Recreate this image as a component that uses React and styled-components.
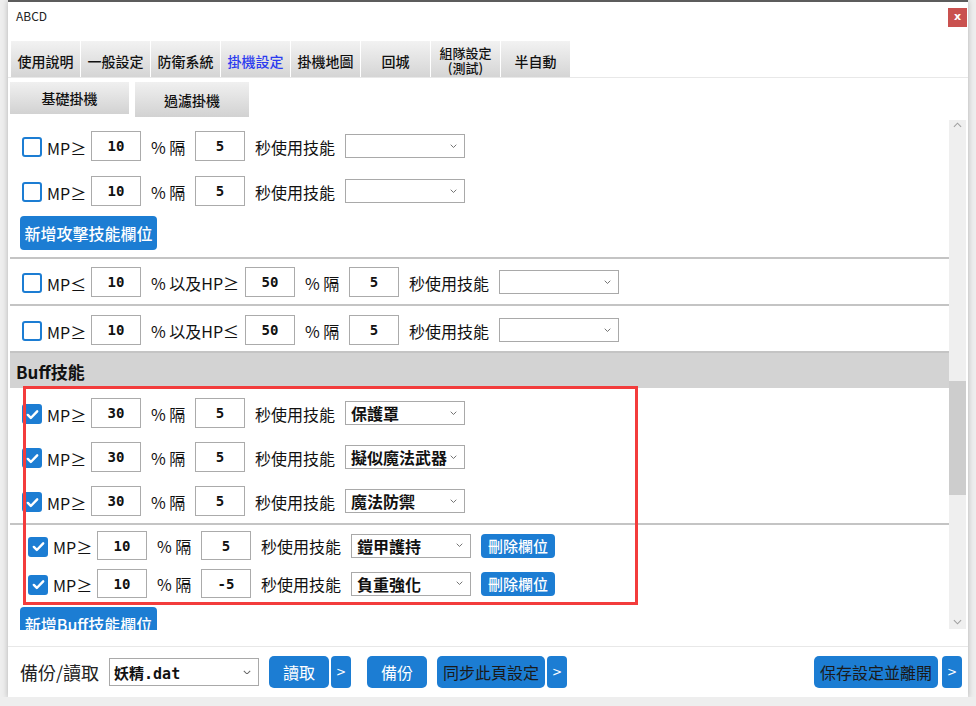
import React from 'react';
import styled, { createGlobalStyle } from 'styled-components';

const CJK = '"Noto Sans CJK TC", "Noto Sans", sans-serif';
const MONO = '"DejaVu Sans Mono", "Liberation Mono", "Noto Sans CJK TC", monospace';
const BLUE = '#1c7dd3';

const GlobalStyle = createGlobalStyle`
  html, body {
    margin: 0;
    padding: 0;
    background: #eeeeee;
    font-family: ${CJK};
    color: #111;
  }
  * { box-sizing: border-box; }
`;

const tabs = ['使用說明', '一般設定', '防衛系統', '掛機設定', '掛機地圖', '回城', '組隊設定\n(測試)', '半自動'];

const attackRows = [
  { v1: '10', v2: '5' },
  { v1: '10', v2: '5' },
];

const buffRows = [
  { v1: '30', v2: '5', skill: '保護罩' },
  { v1: '30', v2: '5', skill: '擬似魔法武器' },
  { v1: '30', v2: '5', skill: '魔法防禦' },
];

const customBuffRows = [
  { v1: '10', v2: '5', skill: '鎧甲護持' },
  { v1: '10', v2: '-5', skill: '負重強化' },
];

const Chevron = ({ size = 7 }) => (
  <svg width={size} height={size * 0.6} viewBox="0 0 10 6" fill="none">
    <path d="M1 1l4 4 4-4" stroke="#666" strokeWidth="1.3" />
  </svg>
);

const Check = ({ checked }) => (
  <CheckBox $checked={checked}>
    {checked && (
      <svg width="15" height="15" viewBox="0 0 16 16" fill="none">
        <path d="M3 8.5l3.2 3.2L13 4.6" stroke="#fff" strokeWidth="2.6" strokeLinecap="round" strokeLinejoin="round" />
      </svg>
    )}
  </CheckBox>
);

const SkillSelect = ({ value }) => (
  <Select>
    <span>{value}</span>
    <Chevron />
  </Select>
);

const SkillRow = ({ checked, op = '≥', v1, v2, skill, indent = 12, h = 30, del }) => (
  <Row $indent={indent} $h={h}>
    <CheckGroup>
      <Check checked={checked} />
      <Label $w={34}>MP{op}</Label>
    </CheckGroup>
    <NumBox $h={h}>{v1}</NumBox>
    <Label $w={34}>% 隔</Label>
    <NumBox $h={h}>{v2}</NumBox>
    <Label $w={80}>秒使用技能</Label>
    <SkillSelect value={skill} />
    {del && <SmallBlue>刪除欄位</SmallBlue>}
  </Row>
);

const HpRow = ({ mpOp, hpOp }) => (
  <Row $indent={12} $h={30}>
    <CheckGroup>
      <Check />
      <Label $w={34}>MP{mpOp}</Label>
    </CheckGroup>
    <NumBox $h={30}>10</NumBox>
    <Label $w={84}>% 以及HP{hpOp}</Label>
    <NumBox $h={30}>50</NumBox>
    <Label $w={34}>% 隔</Label>
    <NumBox $h={30}>5</NumBox>
    <Label $w={80}>秒使用技能</Label>
    <SkillSelect />
  </Row>
);

const App = () => (
  <>
    <GlobalStyle />
    <Dialog>
      <TitleBar>
        <Title>ABCD</Title>
        <CloseBtn>x</CloseBtn>
      </TitleBar>

      <TabBar>
        {tabs.map((t) => (
          <Tab key={t} $active={t === '掛機設定'} $two={t.includes('\n')}>
            {t}
          </Tab>
        ))}
      </TabBar>

      <SubTabBar>
        <SubTab $w={119} $h={32}>基礎掛機</SubTab>
        <SubTab $w={114} $h={35}>過濾掛機</SubTab>
      </SubTabBar>

      <ScrollArea>
        <Content>
          <Section $pt={11} $gap={15}>
            {attackRows.map((r, i) => (
              <SkillRow key={i} {...r} />
            ))}
            <AddButton $mt={-5}>新增攻擊技能欄位</AddButton>
          </Section>
          <Divider $mt={7} />
          <Section $pt={8} $gap={0}>
            <HpRow mpOp="≤" hpOp="≥" />
          </Section>
          <Divider $mt={7} />
          <Section $pt={9} $gap={0}>
            <HpRow mpOp="≥" hpOp="≤" />
          </Section>
          <Divider $mt={6} />
          <GroupHeader>Buff技能</GroupHeader>

          <BuffArea>
            <Highlight />
            <Section $pt={10} $gap={14}>
              {buffRows.map((r, i) => (
                <SkillRow key={i} checked {...r} />
              ))}
            </Section>
            <Divider $mt={7} />
            <Section $pt={6} $gap={9}>
              {customBuffRows.map((r, i) => (
                <SkillRow key={i} checked indent={18} h={29} del {...r} />
              ))}
            </Section>
          </BuffArea>
          <Section $pt={9} $gap={0}>
            <AddButton>新增Buff技能欄位</AddButton>
          </Section>
        </Content>

        <ScrollBar>
          <ScrollArrow><svg width="9" height="6" viewBox="0 0 10 6" fill="none"><path d="M1 5l4-4 4 4" stroke="#a0a0a0" strokeWidth="1.2" /></svg></ScrollArrow>
          <Track>
            <Thumb />
          </Track>
          <ScrollArrow><svg width="9" height="6" viewBox="0 0 10 6" fill="none"><path d="M1 1l4 4 4-4" stroke="#a0a0a0" strokeWidth="1.2" /></svg></ScrollArrow>
        </ScrollBar>
      </ScrollArea>

      <Footer>
        <FooterLabel>備份/讀取</FooterLabel>
        <FileSelect>
          <span>妖精.dat</span>
          <Chevron size={8} />
        </FileSelect>
        <BtnGroup $ml={10}>
          <FooterBtn $w={60}>讀取</FooterBtn>
          <ArrowBtn>&gt;</ArrowBtn>
        </BtnGroup>
        <BtnGroup $ml={16}>
          <FooterBtn $w={60}>備份</FooterBtn>
        </BtnGroup>
        <BtnGroup $ml={10}>
          <FooterBtn $w={108} $dark>同步此頁設定</FooterBtn>
          <ArrowBtn>&gt;</ArrowBtn>
        </BtnGroup>
        <Spacer />
        <BtnGroup>
          <FooterBtn $w={124} $dark>保存設定並離開</FooterBtn>
          <ArrowBtn $gap={4}>&gt;</ArrowBtn>
        </BtnGroup>
      </Footer>
    </Dialog>
  </>
);

const Dialog = styled.div`
  margin-left: 8px;
  width: 960px;
  height: 697px;
  background: #fff;
  border-top: 2px solid #5c5c5c;
  box-shadow: 0 1px 6px rgba(0, 0, 0, 0.25);
  display: flex;
  flex-direction: column;
  overflow: hidden;
`;

const TitleBar = styled.div`
  height: 39px;
  display: flex;
  align-items: flex-start;
  justify-content: space-between;
  padding: 6px 1px 0 8px;
`;

const Title = styled.div`
  font-family: ${CJK};
  font-size: 12px;
  color: #222;
  line-height: 16px;
`;

const CloseBtn = styled.div`
  width: 19px;
  height: 19px;
  background: #c9514f;
  color: #fff;
  font-family: "DejaVu Sans", sans-serif;
  font-weight: bold;
  font-size: 11px;
  display: flex;
  align-items: center;
  justify-content: center;
  line-height: 1;
  padding-bottom: 2px;
`;

const TabBar = styled.div`
  height: 37px;
  display: flex;
  gap: 1px;
  padding-left: 3px;
  border-bottom: 1px solid #e8e8e8;
`;

const Tab = styled.div`
  width: 69px;
  height: 36px;
  background: linear-gradient(#f2f2f2, #d5d5d5);
  display: flex;
  align-items: center;
  justify-content: center;
  text-align: center;
  white-space: pre-line;
  font-size: ${(p) => (p.$two ? '13px' : '14px')};
  line-height: ${(p) => (p.$two ? '15px' : '18px')};
  font-weight: 500;
  color: ${(p) => (p.$active ? '#2b3bf0' : '#111')};
  padding-top: ${(p) => (p.$two ? '2px' : '4px')};
`;

const SubTabBar = styled.div`
  height: 42px;
  display: flex;
  align-items: flex-start;
  gap: 6px;
  padding: 4px 0 0 2px;
`;

const SubTab = styled.div`
  width: ${(p) => p.$w}px;
  height: ${(p) => p.$h}px;
  background: linear-gradient(#f0f0f0, #d2d2d2);
  display: flex;
  align-items: center;
  justify-content: center;
  font-size: 14px;
  font-weight: 500;
  color: #111;
`;

const ScrollArea = styled.div`
  height: 510px;
  display: flex;
  margin: 0 2px;
  overflow: hidden;
`;

const Content = styled.div`
  width: 939px;
  overflow: hidden;
  display: flex;
  flex-direction: column;
`;

const Section = styled.div`
  display: flex;
  flex-direction: column;
  padding-top: ${(p) => p.$pt}px;
  gap: ${(p) => p.$gap}px;
  flex-shrink: 0;
`;

const Divider = styled.div`
  height: 2px;
  background: #c4c4c4;
  margin-top: ${(p) => p.$mt}px;
  flex-shrink: 0;
`;

const Row = styled.div`
  display: flex;
  align-items: center;
  gap: 10px;
  height: ${(p) => p.$h}px;
  padding-left: ${(p) => p.$indent}px;
`;

const CheckGroup = styled.div`
  display: flex;
  align-items: center;
  gap: 5px;
  padding-top: 2px;
`;

const CheckBox = styled.div`
  width: 20px;
  height: 20px;
  border-radius: 3px;
  border: 2px solid ${BLUE};
  background: ${(p) => (p.$checked ? BLUE : '#fff')};
  display: flex;
  align-items: center;
  justify-content: center;
`;

const Label = styled.span`
  width: ${(p) => p.$w}px;
  white-space: nowrap;
  font-family: ${CJK};
  font-size: 16px;
  color: #111;
  line-height: 20px;
  padding-top: 1px;
`;

const NumBox = styled.div`
  width: 50px;
  height: ${(p) => p.$h}px;
  border: 1px solid #ababab;
  display: flex;
  align-items: center;
  justify-content: center;
  font-family: ${MONO};
  font-weight: bold;
  font-size: 14px;
  color: #111;
`;

const Select = styled.div`
  width: 120px;
  height: 24px;
  border: 1px solid #a9a9a9;
  display: flex;
  align-items: center;
  justify-content: space-between;
  padding: 0 7px 0 5px;
  font-family: ${CJK};
  font-weight: bold;
  font-size: 16px;
  color: #111;
  white-space: nowrap;
`;

const SmallBlue = styled.div`
  width: 74px;
  height: 24px;
  border-radius: 4px;
  background: ${BLUE};
  color: #fff;
  font-size: 15px;
  font-weight: 500;
  display: flex;
  align-items: center;
  justify-content: center;
`;

const AddButton = styled.div`
  width: 137px;
  height: 34px;
  margin-left: 10px;
  margin-top: ${(p) => p.$mt || 0}px;
  border-radius: 4px;
  background: ${BLUE};
  color: #fff;
  font-size: 16px;
  font-weight: 500;
  display: flex;
  align-items: center;
  justify-content: center;
  flex-shrink: 0;
`;

const GroupHeader = styled.div`
  height: 35px;
  background: #d3d3d3;
  display: flex;
  align-items: center;
  padding: 1px 0 0 6px;
  font-family: ${CJK};
  font-weight: bold;
  font-size: 17px;
  color: #111;
  flex-shrink: 0;
`;

const BuffArea = styled.div`
  position: relative;
  display: flex;
  flex-direction: column;
  flex-shrink: 0;
`;

const Highlight = styled.div`
  position: absolute;
  left: 13px;
  top: -2px;
  width: 615px;
  height: 219px;
  border: 3px solid #f33c3c;
  pointer-events: none;
`;

const ScrollBar = styled.div`
  width: 17px;
  display: flex;
  flex-direction: column;
  background: #efefef;
  margin-top: -2px;
  height: 511px;
`;

const ScrollArrow = styled.div`
  height: 14px;
  display: flex;
  align-items: center;
  justify-content: center;
`;

const Track = styled.div`
  flex: 1;
  padding-top: 249px;
`;

const Thumb = styled.div`
  height: 114px;
  background: #cdcdcd;
`;

const Footer = styled.div`
  margin-top: 16px;
  border-top: 1px solid #e8e8e8;
  flex: 1;
  display: flex;
  align-items: center;
  padding: 0 6px 0 12px;
`;

const FooterLabel = styled.span`
  font-size: 18px;
  color: #222;
  margin-right: 10px;
`;

const FileSelect = styled.div`
  width: 150px;
  height: 28px;
  border: 1px solid #a9a9a9;
  display: flex;
  align-items: center;
  justify-content: space-between;
  padding: 0 7px 0 4px;
  font-family: ${MONO};
  font-weight: bold;
  font-size: 15px;
  color: #111;
`;

const BtnGroup = styled.div`
  display: flex;
  margin-left: ${(p) => p.$ml || 0}px;
`;

const FooterBtn = styled.div`
  width: ${(p) => p.$w}px;
  height: 32px;
  border-radius: 5px;
  background: ${BLUE};
  color: ${(p) => (p.$dark ? '#1a1a1a' : '#fff')};
  font-size: 16px;
  display: flex;
  align-items: center;
  justify-content: center;
  white-space: nowrap;
`;

const ArrowBtn = styled.div`
  width: 20px;
  height: 32px;
  margin-left: ${(p) => p.$gap || 2}px;
  border-radius: 4px;
  background: ${BLUE};
  color: #fff;
  font-family: "DejaVu Sans", sans-serif;
  font-size: 12px;
  display: flex;
  align-items: center;
  justify-content: center;
`;

const Spacer = styled.div`
  flex: 1;
`;

export default App;
